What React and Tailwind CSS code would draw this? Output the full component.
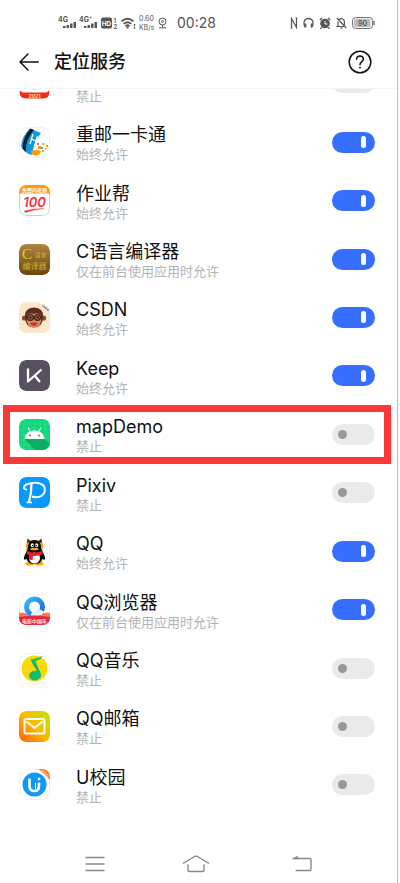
import { useState } from "react";

const svgFont = "Inter, 'Noto Sans CJK SC', sans-serif";

function Tile({ children, className = "" }) {
  return (
    <svg viewBox="0 0 31 31" className={`size-[31px] shrink-0 rounded-[7px] ${className}`} aria-hidden="true">
      {children}
    </svg>
  );
}

const Plain = () => <rect x=".5" y=".5" width="30" height="30" rx="7" fill="#fff" stroke="#f1f1f1" />;

const FestiveIcon = () => (
  <svg viewBox="0 0 31 10" className="h-[10px] w-[31px] shrink-0" aria-hidden="true">
    <path d="M.8 1Q2 4 8 3.500H23Q29 4 30.200 1V3Q30.500 9.500 24 9.500H7Q.5 9.500 .8 3Z" fill="#f22a1c" />
    <path d="M13 0H18L17 1H14Z" fill="#fbd0c0" />
    <text x="15.500" y="8.500" textAnchor="middle" fontSize="5" fontWeight="700" fill="#ffe0a0" fontFamily={svgFont}>2021</text>
  </svg>
);

const CardIcon = () => (
  <Tile>
    <Plain />
    <path d="M11 1.500L22 6Q15 14 13 28Q5 26 2 19Q3 9 11 1.500Z" fill="#0d9bdc" />
    <path d="M11.500 1.500L15 3Q7 11 6.500 25L3.500 21.500Q4 10 11.500 1.500Z" fill="#111c26" />
    <path d="M14 7L11 17M18.500 9L15.500 19M12.500 12L17 14" stroke="#fff" strokeWidth="1.200" fill="none" />
    <path d="M12 24Q17 22 22 24Q21 29 16 28.500Q12 28 12 24Z" fill="#f79a13" />
    <path d="M19 19h3v3h-3zM23 23h2v2h-2zM23.500 16h2v2h-2zM27 18h2v2h-2zM26 21h1.500v1.500H26z" fill="#f79a13" />
    <path d="M18 16h2v2h-2zM22 20h2v2h-2z" fill="#32aee5" />
  </Tile>
);

const HomeworkIcon = () => (
  <Tile>
    <rect x=".5" y=".5" width="30" height="30" rx="7" fill="#fff" stroke="#9fe0e6" />
    <path d="M0 8.500V7Q0 0 7 0H24Q31 0 31 7V8.500Z" fill="#ff9b0b" />
    <text x="15.500" y="6.500" textAnchor="middle" fontSize="5" fontWeight="700" fill="#fff" fontFamily={svgFont}>免费问老师</text>
    <text x="15.500" y="21.500" textAnchor="middle" fontSize="13" fontWeight="600" fontStyle="italic" fill="#f5323c" fontFamily={svgFont}>100</text>
    <path d="M5 26Q14 23.500 25 23.500Q13 25 7 27.500Z" fill="#f5323c" stroke="#f5323c" strokeWidth=".4" />
  </Tile>
);

const CompilerIcon = () => (
  <Tile>
    <defs>
      <linearGradient id="gold" x1="0" y1="0" x2="0" y2="1">
        <stop offset="0" stopColor="#b28340" />
        <stop offset="1" stopColor="#6c4710" />
      </linearGradient>
    </defs>
    <rect width="31" height="31" rx="7" fill="url(#gold)" />
    <text x="3" y="14.500" fontSize="15" fill="#d6cf27" fontFamily="'Liberation Serif', serif">C</text>
    <text x="15.500" y="13" fontSize="6" fill="#c4b72a" fontFamily={svgFont}>语言</text>
    <text x="15.500" y="25" textAnchor="middle" fontSize="8" fill="#c4b72a" fontFamily={svgFont}>编译器</text>
  </Tile>
);

const CsdnIcon = () => (
  <Tile>
    <rect width="31" height="31" rx="7" fill="#fee6cc" />
    <path d="M20 0H24Q31 0 31 7V10Z" fill="#fff" />
    <text x="22.500" y="3.500" fontSize="3" fontWeight="700" fill="#555" transform="rotate(43 22.500 3.500)" fontFamily={svgFont}>CSDN</text>
    <circle cx="5.500" cy="16" r="2.600" fill="#8b4934" />
    <circle cx="24.500" cy="16" r="2.600" fill="#8b4934" />
    <path d="M6 15Q5 6 15 5.500Q25 6 24 15Q24 25 15 25.500Q6 25 6 15Z" fill="#5f2c22" />
    <path d="M8 14Q10 10 15 12Q20 10 22 14V19Q21 25.500 15 25.500Q9 25.500 8 19Z" fill="#e28a60" />
    <path d="M11 21Q15 19.500 19 21Q18 24 15 24Q12 24 11 21Z" fill="#bd3f34" />
    <g fill="#a56043" stroke="#33231f" strokeWidth="1.200">
      <circle cx="11.500" cy="15.500" r="2.900" />
      <circle cx="18.500" cy="15.500" r="2.900" />
    </g>
    <circle cx="11.500" cy="15.500" r="1" fill="#171210" />
    <circle cx="18.500" cy="15.500" r="1" fill="#171210" />
  </Tile>
);

const KeepIcon = () => (
  <Tile>
    <rect width="31" height="31" rx="7" fill="#584f60" />
    <path d="M9 8.500V21.500L22.500 9.500M15.500 15.500L21 22" fill="none" stroke="#fff" strokeWidth="2.300" strokeLinejoin="round" />
  </Tile>
);

const AndroidIcon = () => (
  <Tile>
    <rect width="31" height="31" rx="7" fill="#0fd77a" />
    <path d="M5 0V31M10 0V31M15.500 0V31M21 0V31M26 0V31M0 5H31M0 10H31M0 15.500H31M0 21H31M0 26H31" stroke="#48e29a" strokeWidth=".4" />
    <path d="M5.500 20L25.500 20L31 25V31H16Z" fill="#0a9e5b" opacity=".75" />
    <path d="M5.500 20Q6.500 11.500 15.500 11.500Q24.500 11.500 25.500 20Z" fill="#fff" />
    <path d="M9 8.500L11.500 13M22 8.500L19.500 13" stroke="#fff" strokeWidth="1" />
    <circle cx="11" cy="16.500" r="1" fill="#0fae66" />
    <circle cx="20" cy="16.500" r="1" fill="#0fae66" />
  </Tile>
);

const PixivIcon = () => (
  <Tile>
    <rect width="31" height="31" rx="7" fill="#0799fd" />
    <path d="M5 12Q4.500 8 9 7Q19 4 24.500 8.500Q28 14 23 18.500Q19 21.500 13 19.500" fill="none" stroke="#fff" strokeWidth="1.900" />
    <path d="M12.500 7Q12.500 16 10 25" fill="none" stroke="#fff" strokeWidth="2.300" />
    <path d="M7.500 25.500H13" stroke="#fff" strokeWidth="1.600" />
    <path d="M5 11.500L8 13" stroke="#fff" strokeWidth="1.500" />
  </Tile>
);

const QQIcon = () => (
  <Tile>
    <Plain />
    <path d="M6.500 10Q7 4 15.500 4Q24 4 24.500 10L23 15H8Z" fill="#f0a51d" />
    <path d="M8 7L8.500 2.500L12 5.500ZM19 5.500L22.500 2.500L23 7Z" fill="#26201c" />
    <ellipse cx="11" cy="27.500" rx="4.500" ry="2" fill="#f6a916" />
    <ellipse cx="20" cy="27.500" rx="4.500" ry="2" fill="#f6a916" />
    <path d="M9 12Q9 4 15.500 4Q22 4 22 12L26 21Q27 25 23.500 23Q22 28 15.500 28Q9 28 7.500 23Q4 25 5 21Z" fill="#080808" />
    <ellipse cx="15.500" cy="22" rx="5.500" ry="5.500" fill="#fff" />
    <path d="M8 15Q15 18 23 15L24 18Q19 20.500 14 20L13.500 24L10 23.500V19L7.500 18Z" fill="#ea1d2c" />
    <ellipse cx="13.300" cy="9.300" rx="1.600" ry="2" fill="#fff" />
    <ellipse cx="17.700" cy="9.300" rx="1.600" ry="2" fill="#fff" />
    <circle cx="13.700" cy="9.500" r=".8" />
    <circle cx="17.300" cy="9.500" r=".8" />
    <ellipse cx="15.500" cy="13" rx="4.200" ry="1.300" fill="#f6a916" />
  </Tile>
);

const BrowserIcon = () => (
  <Tile>
    <defs>
      <linearGradient id="ring" x1="0" y1="0" x2="1" y2="1">
        <stop offset="0" stopColor="#36b7f8" />
        <stop offset="1" stopColor="#1765e8" />
      </linearGradient>
    </defs>
    <Plain />
    <circle cx="15.500" cy="13" r="8" fill="none" stroke="url(#ring)" strokeWidth="5" />
    <path d="M12 21Q12 17 16 17.500Q18 13.500 22 16Q26 17 26 23H12Z" fill="#e4effb" />
    <path d="M0 19Q5 17.500 9 21Q15.500 23 22 21Q26 17.500 31 19V24Q31 31 24 31H7Q0 31 0 24Z" fill="#f47d4e" />
    <path d="M0 23Q15.500 20 31 23V24Q31 31 24 31H7Q0 31 0 24Z" fill="#e9233f" />
    <text x="15.500" y="28.500" textAnchor="middle" fontSize="5" fontWeight="700" fill="#ffe5d5" fontFamily={svgFont}>电影中国年</text>
  </Tile>
);

const MusicIcon = () => (
  <Tile>
    <Plain />
    <circle cx="15.500" cy="15.500" r="13" fill="#fdd903" />
    <path d="M23.500 2.500Q22.500 6.500 16.500 8Q18.500 14 21.500 19.500Q23 24 20 26Q15.500 29 11.500 26Q8.500 22.500 11.500 19.500Q14 17 18 18Q14 12.500 11.500 6.500Q19 5.500 23.500 2.500Z" fill="#0fbd70" />
  </Tile>
);

const MailIcon = () => (
  <Tile>
    <defs>
      <linearGradient id="mail" x1="0" y1="1" x2="1" y2="0">
        <stop offset="0" stopColor="#ff5b0a" />
        <stop offset=".5" stopColor="#ffb800" />
        <stop offset="1" stopColor="#b5ec08" />
      </linearGradient>
    </defs>
    <rect width="31" height="31" rx="7" fill="url(#mail)" />
    <rect x="5.500" y="8" width="20" height="14.500" rx="1.500" fill="none" stroke="#fff" strokeWidth="2" />
    <path d="M7.500 10.500L15.500 17L23.500 10.500" fill="none" stroke="#fff" strokeWidth="2" />
  </Tile>
);

const CampusIcon = () => (
  <Tile>
    <Plain />
    <path d="M19.500 0H24Q31 0 31 7V11Z" fill="#f58a42" />
    <path d="M23 2L29 7.500" stroke="#fbd0b0" strokeWidth="2" strokeDasharray="1.500 1" />
    <circle cx="15.500" cy="15.500" r="12" fill="#0f98fb" />
    <path d="M10.500 9.500V17Q10.500 22 15.500 22Q20 22 20 17V13.500" fill="none" stroke="#fff" strokeWidth="2.600" />
    <path d="M16.500 14V20" stroke="#fff" strokeWidth="1.200" />
    <circle cx="20" cy="10" r="1.400" fill="#fff" />
  </Tile>
);

const ALWAYS = "始终允许";
const FOREGROUND = "仅在前台使用应用时允许";
const DENIED = "禁止";

const apps = [
  { id: "card", name: "重邮一卡通", status: ALWAYS, on: true, Icon: CardIcon },
  { id: "homework", name: "作业帮", status: ALWAYS, on: true, Icon: HomeworkIcon },
  { id: "compiler", name: "C语言编译器", status: FOREGROUND, on: true, Icon: CompilerIcon },
  { id: "csdn", name: "CSDN", status: ALWAYS, on: true, Icon: CsdnIcon },
  { id: "keep", name: "Keep", status: ALWAYS, on: true, Icon: KeepIcon },
  { id: "mapdemo", name: "mapDemo", status: DENIED, on: false, Icon: AndroidIcon, marked: true },
  { id: "pixiv", name: "Pixiv", status: DENIED, on: false, Icon: PixivIcon },
  { id: "qq", name: "QQ", status: ALWAYS, on: true, Icon: QQIcon },
  { id: "browser", name: "QQ浏览器", status: FOREGROUND, on: true, Icon: BrowserIcon },
  { id: "music", name: "QQ音乐", status: DENIED, on: false, Icon: MusicIcon },
  { id: "mail", name: "QQ邮箱", status: DENIED, on: false, Icon: MailIcon },
  { id: "campus", name: "U校园", status: DENIED, on: false, Icon: CampusIcon },
];

function Switch({ id, defaultOn }) {
  const [on, setOn] = useState(defaultOn);
  return (
    <input
      id={id}
      type="checkbox"
      role="switch"
      checked={on}
      onChange={(e) => setOn(e.target.checked)}
      className="flex h-[21px] w-[43px] shrink-0 cursor-pointer appearance-none items-center rounded-full bg-[#eaeaea] px-[6px] before:block before:size-[9px] before:rounded-full before:bg-[#999999] checked:justify-end checked:bg-[#366ffe] checked:px-[9px] checked:before:h-3 checked:before:w-[5px] checked:before:bg-white"
    />
  );
}

function AppRow({ id, name, status, on, Icon, marked }) {
  return (
    <li className="relative flex flex-1 items-center pr-[22px] pl-[19px]">
      <Icon />
      <label htmlFor={id} className="ml-[26px] flex-1 cursor-pointer pt-1">
        <span className="block text-lg leading-5 text-[#111111]">{name}</span>
        <span className="block text-[13px] leading-[18px] text-[#b2b2b2]">{status}</span>
      </label>
      <Switch id={id} defaultOn={on} />
      {marked && <span className="pointer-events-none absolute inset-y-0 right-[6px] left-[3px] border-[7px] border-[#fc3737]" />}
    </li>
  );
}

function Signal({ label }) {
  return (
    <svg viewBox="0 0 19 14" className="h-[14px] w-[19px]" aria-hidden="true">
      <text x="0" y="6" fontSize="7" fontWeight="700" fill="#555" fontFamily={svgFont}>{label}</text>
      <path d="M5 10h2.500v2H5zM8.500 9H11v3H8.500zM12 7.500h2.500V12H12zM15.500 6H18v6h-2.500z" fill="#555" />
    </svg>
  );
}

function StatusBar() {
  return (
    <div className="flex h-[45px] shrink-0 items-center justify-between pr-[22px] pl-[58px] text-[#555555]">
      <div className="flex items-center">
        <Signal label="4G" />
        <span className="ml-0.5 flex"><Signal label="4G⁺" /></span>
        <svg viewBox="0 0 18 14" className="ml-[3px] h-[14px] w-[18px]" aria-hidden="true">
          <rect y="1.500" width="11" height="11" rx="2" fill="#555" />
          <text x="5.500" y="9.500" textAnchor="middle" fontSize="6.500" fontWeight="700" fill="#fff" fontFamily={svgFont}>HD</text>
          <text x="12.500" y="6.500" fontSize="6" fontWeight="600" fill="#555" fontFamily={svgFont}>1</text>
          <text x="12.500" y="12.500" fontSize="6" fontWeight="600" fill="#555" fontFamily={svgFont}>2</text>
        </svg>
        <svg viewBox="0 0 15 12" className="ml-0.5 h-3 w-[15px]" fill="none" stroke="#555" strokeWidth="1.900" aria-hidden="true">
          <path d="M.6 4.300Q6.500 -1 12.400 4.300M2.700 6.900Q6.500 3.400 10.300 6.900M4.600 9.200Q6.500 7.400 8.400 9.200" />
          <path d="M6.500 9.500v2" />
          <path d="M13.500 7v1.800M13.500 9.800v1.800" strokeWidth="1.500" />
        </svg>
        <div className="ml-[3px] w-[17px] text-[7px] leading-[9px]">
          <div>0.60</div>
          <div>KB/s</div>
        </div>
        <svg viewBox="0 0 9 12" className="ml-[2px] h-3 w-[9px]" fill="none" stroke="#555" aria-hidden="true">
          <circle cx="4.500" cy="4.500" r="3.500" />
          <circle cx="4.500" cy="4.500" r="1" />
          <path d="M4.500 8v2.500M1 10.800h7" />
        </svg>
        <time className="ml-[10px] text-sm leading-5">00:28</time>
      </div>
      <div className="flex items-center gap-[5px]">
        <svg viewBox="0 0 8 12" className="h-3 w-2" fill="none" stroke="#555" strokeWidth="1.200" aria-hidden="true">
          <path d="M1.500 11V1.500L6.500 10.500V1M.5 11H2.500M5.500 1H7.500" />
        </svg>
        <svg viewBox="0 0 11 12" className="h-3 w-[11px]" fill="none" stroke="#555" strokeWidth="1.300" aria-hidden="true">
          <path d="M2 10Q.8 7 1 5.500Q1.500 1.500 5.500 1.500Q9.500 1.500 10 5.500Q10.200 7 9 10" />
          <path d="M2.500 6.500v4M8.500 6.500v4" strokeWidth="1.600" />
        </svg>
        <svg viewBox="0 0 12 12" className="size-3" fill="none" aria-hidden="true">
          <circle cx="6" cy="6.500" r="4.800" fill="#555" />
          <path d="M.8 3L3 1M11.200 3L9 1M2.500 10.500L1.500 12M9.500 10.500L10.500 12" stroke="#555" strokeWidth="1.400" />
          <path d="M6 4v3h2.500" stroke="#fff" />
        </svg>
        <svg viewBox="0 0 11 12" className="h-3 w-[11px]" fill="none" stroke="#555" strokeWidth="1.200" aria-hidden="true">
          <path d="M3 2.500Q5.500 .5 8 3Q8.500 4 8.500 8M2 4.500V8L1 9.500H8M4.500 11.200H6.500M.8 1L10.300 11" />
        </svg>
        <svg viewBox="0 0 23 12" className="h-3 w-[23px]" aria-hidden="true">
          <rect x=".6" y=".6" width="20" height="10.800" rx="3" fill="#fff" stroke="#666" />
          <rect x="2" y="2" width="16.500" height="8" rx="1.500" fill="#bdbdbd" />
          <path d="M22 4v4" stroke="#666" strokeWidth="1.300" />
          <text x="10.500" y="8.700" textAnchor="middle" fontSize="7" fontWeight="600" fill="#555" fontFamily={svgFont}>90</text>
        </svg>
      </div>
    </div>
  );
}

export default function App() {
  return (
    <div className="h-screen bg-white pr-0.5 font-['Inter','Noto_Sans_CJK_SC',sans-serif]">
      <div className="flex h-full flex-col border-r border-[#bdbdbd]">
        <StatusBar />
        <header className="flex h-11 shrink-0 items-center border-b border-[#f5f5f5] pr-[25px] pb-[9px] pl-[19px]">
          <button type="button" aria-label="返回" className="cursor-pointer">
            <svg viewBox="0 0 20 18" className="h-[18px] w-5" fill="none" stroke="#111" strokeWidth="1.500" strokeLinecap="round" strokeLinejoin="round" aria-hidden="true">
              <path d="M9 1L1 9L9 17M1 9H19.300" />
            </svg>
          </button>
          <h1 className="ml-[15px] flex-1 text-lg leading-6 font-medium text-[#111111]">定位服务</h1>
          <button type="button" aria-label="帮助" className="cursor-pointer">
            <svg viewBox="0 0 24 24" className="size-6" fill="none" stroke="#111" strokeWidth="1.500" aria-hidden="true">
              <circle cx="12" cy="12" r="10.800" />
              <path d="M8.600 9.300Q8.700 6 12 6Q15.400 6.100 15.400 9Q15.400 10.500 13.600 11.800Q12 13 12 14.800" strokeLinecap="round" />
              <circle cx="12" cy="17.600" r=".6" fill="#111" strokeWidth=".8" />
            </svg>
          </button>
        </header>
        <main className="flex flex-1 flex-col">
          <div className="flex h-6 shrink-0 items-start pr-[22px] pl-[19px]">
            <FestiveIcon />
            <span className="ml-[26px] flex-1 text-[13px] leading-[14px] text-[#b2b2b2]">禁止</span>
            <span className="flex h-1 w-[43px] items-end overflow-hidden">
              <span className="h-[21px] w-full shrink-0 rounded-full bg-[#eaeaea]" />
            </span>
          </div>
          <ul className="flex flex-1 flex-col">
            {apps.map((app) => (
              <AppRow key={app.id} {...app} />
            ))}
          </ul>
        </main>
        <nav className="flex h-[69px] shrink-0 items-end justify-between pr-[85px] pb-[10px] pl-[85px]">
          <button type="button" aria-label="菜单" className="cursor-pointer">
            <svg viewBox="0 0 20 18" className="h-[18px] w-5" stroke="#888" strokeWidth="1.400" aria-hidden="true">
              <path d="M.5 2.500H19.500M.5 9H19.500M.5 15.500H19.500" />
            </svg>
          </button>
          <button type="button" aria-label="主页" className="mr-[6px] cursor-pointer">
            <svg viewBox="0 0 28 18" className="h-[18px] w-7" fill="none" stroke="#888" strokeWidth="1.400" strokeLinejoin="round" aria-hidden="true">
              <path d="M1 8.500L12.500 1.500Q14 .8 15.500 1.500L27 8.500M6 9.500V15Q6 16.500 7.500 16.500H20.500Q22 16.500 22 15V9.500" />
            </svg>
          </button>
          <button type="button" aria-label="后退" className="cursor-pointer">
            <svg viewBox="0 0 20 18" className="h-[18px] w-5" fill="none" stroke="#888" strokeWidth="1.400" strokeLinejoin="round" aria-hidden="true">
              <path d="M1 3.500H17.500Q19 3.500 19 5V14Q19 15.500 17.500 15.500H3.500" />
              <path d="M.5 3.800L5.500 1V3.800Z" fill="#888" strokeWidth=".5" />
            </svg>
          </button>
        </nav>
      </div>
    </div>
  );
}
